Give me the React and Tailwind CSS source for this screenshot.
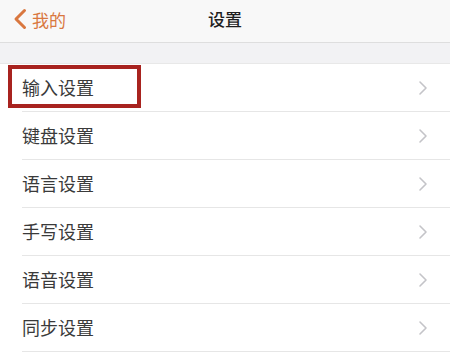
import React from "react";

const items = ["输入设置", "键盘设置", "语言设置", "手写设置", "语音设置", "同步设置"];

function Chevron() {
  return (
    <svg width="10" height="16" viewBox="0 0 10 16" fill="none">
      <path d="M2 2l6 6-6 6" stroke="#c4c4c8" strokeWidth="1.6" strokeLinecap="round" strokeLinejoin="round" />
    </svg>
  );
}

export default function App() {
  return (
    <div
      className="w-[450px] h-[352px] overflow-hidden bg-white"
      style={{ fontFamily: '"Noto Sans CJK SC", "Noto Sans", sans-serif' }}
    >
      <div className="relative h-[43px] bg-[#f8f8f8] border-b border-[#dedede] flex items-center">
        <div className="flex items-center pl-[13px] gap-[5px] text-[#d9773f] text-[17px] leading-none -mt-[4px]">
          <svg width="14" height="22" viewBox="0 0 14 22" fill="none">
            <path d="M11.5 2.5L3 11l8.5 8.5" stroke="#d9773f" strokeWidth="3" strokeLinecap="round" strokeLinejoin="round" />
          </svg>
          <span>我的</span>
        </div>
        <div className="absolute left-0 right-0 top-0 h-[38px] flex items-center justify-center text-[17px] text-[#1f1f1f] font-medium pointer-events-none">
          设置
        </div>
      </div>
      <div className="h-[21px] bg-[#f2f2f4] border-b border-[#e8e8e8]" />
      <div className="flex flex-col">
        {items.map((t, i) => (
          <div key={t} className="relative h-[48px] pl-[22px] flex">
            <div className="flex-1 flex items-center justify-between pr-[22px] border-b border-[#e6e6e6]">
              <span className="text-[18px] text-[#3a3a3a] leading-none -mt-[2px]">{t}</span>
              <Chevron />
            </div>
            {i === 0 && (
              <div className="absolute left-[8px] top-[1px] w-[133px] h-[43px] border-[4px] border-[#a8231f]" />
            )}
          </div>
        ))}
      </div>
    </div>
  );
}
